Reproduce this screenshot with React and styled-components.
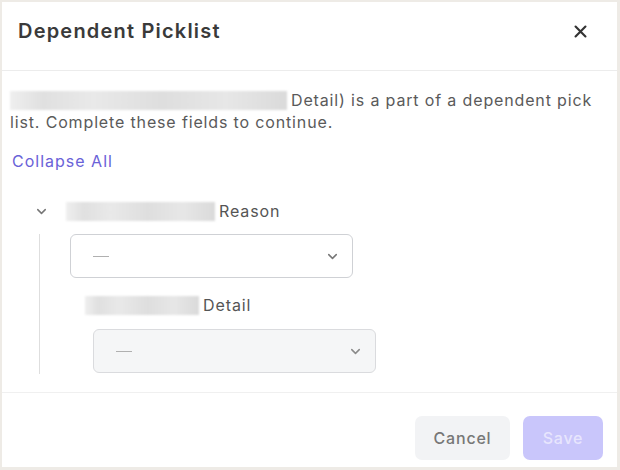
import React from 'react'
import styled, { createGlobalStyle } from 'styled-components'

const Global = createGlobalStyle`
  html, body {
    margin: 0;
    padding: 0;
    background: #eeebe6;
  }
  body {
    font-family: Inter, "Noto Sans", sans-serif;
    color: #555;
  }
`

const Dialog = styled.div`
  box-sizing: border-box;
  width: 615px;
  height: 465px;
  margin: 2px 3px 3px 2px;
  background: #fff;
  display: flex;
  flex-direction: column;
`

const Header = styled.header`
  box-sizing: border-box;
  height: 69px;
  flex: 0 0 auto;
  display: flex;
  align-items: center;
  justify-content: space-between;
  padding: 0 28px 10px 16px;
  border-bottom: 1px solid #ececec;
`

const Title = styled.h1`
  margin: 0;
  font-size: 20px;
  font-weight: 600;
  color: #3a3a3a;
  letter-spacing: 1.2px;
`

const Close = styled.button`
  border: 0;
  background: none;
  padding: 0;
  display: flex;
  color: #333;
  cursor: pointer;
`

const Body = styled.section`
  flex: 1 1 auto;
  padding: 18px 14px 0 8px;
`

const Message = styled.p`
  margin: 0;
  font-size: 16px;
  line-height: 22px;
  letter-spacing: 0.85px;
  color: #5a5a5a;
`

const Redacted = styled.span`
  display: inline-block;
  vertical-align: -4px;
  width: ${props => props.width};
  height: ${props => props.height || '19px'};
  margin-right: 4px;
  background: linear-gradient(90deg, #efefef 0%, #e0e0e0 12%, #e9e9e9 30%, #dedede 55%, #e7e7e7 78%, #dadada 100%);
  filter: blur(0.8px);
`

const LinkButton = styled.button`
  margin: 17px 0 0 2px;
  padding: 0;
  border: 0;
  background: none;
  font-family: inherit;
  font-size: 16px;
  line-height: 22px;
  letter-spacing: 1px;
  color: #6a62d8;
  cursor: pointer;
`

const Tree = styled.div`
  margin-top: 28px;
  display: grid;
  grid-template-columns: 40px 1fr;
  grid-template-rows: auto auto;
`

const Toggle = styled.span`
  display: flex;
  align-items: center;
  justify-content: center;
  height: 22px;
  margin-left: 11px;
  width: 40px;
  color: #777;
`

const Label = styled.div`
  display: flex;
  align-items: center;
  font-size: 16px;
  line-height: 22px;
  letter-spacing: 0.9px;
  color: #555;
  margin-left: ${props => props.indent || '0'};
  margin-top: ${props => props.gap || '0'};
`

const Branch = styled.div`
  grid-column: 1 / 3;
  display: flex;
  flex-direction: column;
  border-left: 1px solid #dedede;
  margin-left: 29px;
  margin-top: 12px;
  padding-bottom: 1px;
`

const Select = styled.div`
  box-sizing: border-box;
  width: 283px;
  height: 44px;
  margin-left: ${props => props.indent};
  margin-top: ${props => props.gap || '0'};
  display: flex;
  align-items: center;
  justify-content: space-between;
  padding: 0 12px 0 22px;
  border: 1px solid ${props => props.disabled ? '#dadbde' : '#cfd1d5'};
  border-radius: 6px;
  background: ${props => props.disabled ? '#f5f6f7' : '#fff'};
`

const Dash = styled.span`
  display: block;
  width: 16px;
  height: 1px;
  background: #b0b0b0;
`

const Caret = styled.span`
  display: flex;
  color: ${props => props.muted ? '#8a8a8a' : '#777'};
`

const Footer = styled.footer`
  flex: 0 0 auto;
  height: 75px;
  box-sizing: border-box;
  border-top: 1px solid #f0f0f0;
  display: flex;
  align-items: flex-start;
  justify-content: flex-end;
  gap: 13px;
  padding: 23px 14px 0 0;
`

const Button = styled.button`
  height: 44px;
  width: ${props => props.width};
  border: 0;
  border-radius: 7px;
  font-family: inherit;
  font-size: 16px;
  font-weight: 500;
  letter-spacing: 0.8px;
  background: ${props => props.primary ? '#c9c6fb' : '#f2f3f5'};
  color: ${props => props.primary ? '#e7e5fd' : '#777'};
  cursor: pointer;
`

function Chevron ({ size = 15 }) {
  return (
    <svg width={size} height={size} viewBox='0 0 24 24' fill='none' stroke='currentColor' strokeWidth='2.4' strokeLinecap='round' strokeLinejoin='round'>
      <path d='m6 9 6 6 6-6' />
    </svg>
  )
}

export default function App () {
  return (
    <>
      <Global />
      <Dialog>
        <Header>
          <Title>Dependent Picklist</Title>
          <Close aria-label='Close'>
            <svg width='17' height='17' viewBox='0 0 24 24' fill='none' stroke='currentColor' strokeWidth='3' strokeLinecap='round'>
              <path d='M5 5 19 19M19 5 5 19' />
            </svg>
          </Close>
        </Header>
        <Body>
          <Message>
            <Redacted width='277px' />Detail) is a part of a dependent pick list. Complete these fields to continue.
          </Message>
          <LinkButton>Collapse All</LinkButton>
          <Tree>
            <Toggle><Chevron /></Toggle>
            <Label indent='16px'><Redacted width='149px' />Reason</Label>
            <Branch>
              <Select indent='30px'>
                <Dash />
                <Caret><Chevron /></Caret>
              </Select>
              <Label indent='45px' gap='16px'><Redacted width='114px' />Detail</Label>
              <Select indent='53px' gap='13px' disabled>
                <Dash />
                <Caret muted><Chevron /></Caret>
              </Select>
            </Branch>
          </Tree>
        </Body>
        <Footer>
          <Button width='95px'>Cancel</Button>
          <Button width='80px' primary>Save</Button>
        </Footer>
      </Dialog>
    </>
  )
}
